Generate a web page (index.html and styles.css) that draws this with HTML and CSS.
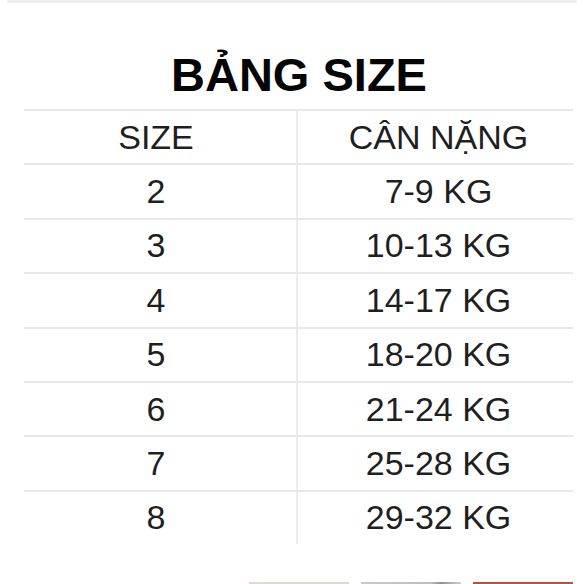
FILE: index.html
```html
<!DOCTYPE html>
<html lang="vi">
<head>
<meta charset="utf-8">
<title>Bảng size</title>
<link rel="stylesheet" href="styles.css">
</head>
<body>
<div class="topbar"></div>
<h1 class="title">BẢNG SIZE</h1>
<div class="table">
  <div class="row head"><div class="cell size">SIZE</div><div class="cell weight">CÂN NẶNG</div></div>
  <div class="row"><div class="cell size">2</div><div class="cell weight">7-9 KG</div></div>
  <div class="row"><div class="cell size">3</div><div class="cell weight">10-13 KG</div></div>
  <div class="row"><div class="cell size">4</div><div class="cell weight">14-17 KG</div></div>
  <div class="row"><div class="cell size">5</div><div class="cell weight">18-20 KG</div></div>
  <div class="row"><div class="cell size">6</div><div class="cell weight">21-24 KG</div></div>
  <div class="row"><div class="cell size">7</div><div class="cell weight">25-28 KG</div></div>
  <div class="row"><div class="cell size">8</div><div class="cell weight">29-32 KG</div></div>
</div>
<div class="thumbs">
  <div class="thumb t1"></div>
  <div class="thumb t2"></div>
  <div class="thumb t3"></div>
</div>
</body>
</html>
```

FILE: styles.css
```css
html, body {
  margin: 0;
  padding: 0;
  background: #ffffff;
}
body {
  width: 584px;
  height: 584px;
  overflow: hidden;
  font-family: "Liberation Sans", Arial, sans-serif;
}
.topbar {
  height: 3px;
  margin: 0 7px;
  background: #efefef;
}
.title {
  margin: 46px 0 8px;
  font-size: 47px;
  line-height: 52px;
  font-weight: bold;
  color: #050505;
  text-align: center;
  padding-left: 14px;
}
.table {
  margin: 0 11px 0 24px;
}
.row {
  display: grid;
  grid-template-columns: 274px 1fr;
  height: 54.4px;
  box-sizing: border-box;
  border-top: 2px solid #e8e8e8;
}
.cell {
  display: flex;
  align-items: center;
  justify-content: center;
  font-size: 34px;
  color: #1f1f1f;
}
.cell.size {
  border-right: 2px solid #ececec;
  padding-right: 8px;
}
.cell.weight {
  padding-left: 6px;
}
.thumbs {
  display: flex;
  justify-content: flex-end;
  gap: 12px;
  margin: 38px 11px 0 0;
}
.thumb {
  width: 100px;
  height: 3px;
}
.t1 { background: #dcd9d3; }
.t2 { background: linear-gradient(90deg, #c9c9c9 0%, #bdbdbd 70%, #8f8f8f 80%, #d0d0d0 100%); }
.t3 { background: #b4533e; }
```
